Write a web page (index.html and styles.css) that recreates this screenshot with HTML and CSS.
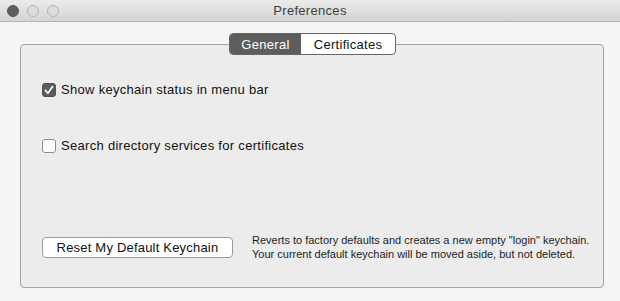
FILE: index.html
```html
<!DOCTYPE html>
<html lang="en">

<head>
  <meta charset="UTF-8">
  <title>Preferences</title>

  <link rel="stylesheet" href="styles.css">
</head>

<body>

  <div class="window">
    <header class="titlebar">
      <div class="titlebar__lights">
        <span class="light light_active"></span>
        <span class="light"></span>
        <span class="light"></span>
      </div>
      <h1 class="titlebar__title">Preferences</h1>
      <div></div>
    </header>

    <main class="content">
      <div class="tabs">
        <button class="tabs__item tabs__item_active">General</button>
        <button class="tabs__item">Certificates</button>
      </div>

      <section class="panel">
        <label class="option">
          <span class="option__box option__box_checked">
            <svg width="14" height="14" viewBox="0 0 14 14">
              <polyline points="3.4,7.4 5.9,10.2 10.6,3.6" fill="none" stroke="#fff" stroke-width="1.7"
                stroke-linecap="round" stroke-linejoin="round" />
            </svg>
          </span>
          Show keychain status in menu bar
        </label>

        <label class="option option_spaced">
          <span class="option__box"></span>
          Search directory services for certificates
        </label>

        <div class="reset">
          <button class="reset__btn">Reset My Default Keychain</button>
          <p class="reset__text">Reverts to factory defaults and creates a new empty "login" keychain.<br>
            Your current default keychain will be moved aside, but not deleted.</p>
        </div>
      </section>
    </main>
  </div>

</body>

</html>
```

FILE: styles.css
```css
html,
body {
  margin: 0;
  font-family: "Liberation Sans", Arial, sans-serif;
  -webkit-font-smoothing: antialiased;
}

button {
  font-family: inherit;
  margin: 0;
}

.window {
  width: 620px;
  height: 301px;
  display: flex;
  flex-direction: column;
  background-color: #f5f5f5;
  overflow: hidden;
}

.titlebar {
  height: 21px;
  display: grid;
  grid-template-columns: 1fr auto 1fr;
  align-items: center;
  background: linear-gradient(#ebebeb, #d4d4d4);
  border-bottom: 1px solid #b4b4b4;
}

.titlebar__lights {
  display: flex;
  gap: 8px;
  padding-left: 7px;
}

.light {
  width: 10px;
  height: 10px;
  border: 1px solid #b3b3b3;
  border-radius: 50%;
  background-color: #dddddd;
}

.light_active {
  background-color: #5e5e5e;
  border-color: #555555;
}

.titlebar__title {
  margin: 0;
  font-size: 13px;
  font-weight: normal;
  letter-spacing: 0.3px;
  color: #3f3f3f;
}

.content {
  flex: 1;
  display: flex;
  flex-direction: column;
  padding: 11px 16px 13px 20px;
}

.tabs {
  position: relative;
  z-index: 1;
  align-self: center;
  display: flex;
  height: 22px;
  box-sizing: border-box;
  border: 1px solid #666666;
  border-radius: 4px;
  overflow: hidden;
  background-color: #ffffff;
  margin-left: 1px;
}

.tabs__item {
  border: none;
  background: none;
  font-size: 13px;
  letter-spacing: 0.3px;
  color: #111111;
  padding: 0;
  width: 94px;
  height: 20px;
}

.tabs__item_active {
  background-color: #5d5d5d;
  color: #ffffff;
  width: 71px;
}

.panel {
  flex: 1;
  margin-top: -11px;
  display: flex;
  flex-direction: column;
  padding: 38px 21px 26px;
  background-color: #ececec;
  border: 1px solid #a3a3a3;
  border-radius: 4px;
}

.option {
  display: flex;
  align-items: center;
  gap: 5px;
  font-size: 13px;
  line-height: 14px;
  letter-spacing: 0.3px;
  color: #111111;
}

.option_spaced {
  margin-top: 42px;
}

.option__box {
  width: 12px;
  height: 12px;
  border: 1px solid #8e8e8e;
  border-radius: 3px;
  background-color: #ffffff;
  display: flex;
  align-items: center;
  justify-content: center;
}

.option__box_checked {
  background-color: #5b5b5b;
  border-color: #505050;
}

.option__box svg {
  flex-shrink: 0;
}

.reset {
  margin-top: auto;
  display: flex;
  align-items: center;
  gap: 19px;
}

.reset__btn {
  flex-shrink: 0;
  width: 191px;
  height: 21px;
  padding: 0;
  font-size: 13px;
  letter-spacing: 0.2px;
  color: #111111;
  background-color: #ffffff;
  border: 1px solid #9a9a9a;
  border-radius: 4px;
}

.reset__text {
  margin: 0;
  font-size: 11px;
  line-height: 14px;
  white-space: nowrap;
  color: #1d1d1d;
}
```
